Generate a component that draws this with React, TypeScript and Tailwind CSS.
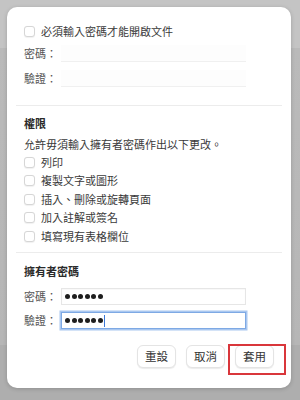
import React from "react";

const FONT = { fontFamily: '"Noto Sans CJK TC", "Noto Sans", sans-serif' };

function Box() {
  return (
    <div className="h-[11px] w-[11px] shrink-0 rounded-[3px] border border-[#d6d6d6] bg-white shadow-[0_0.5px_1px_rgba(0,0,0,0.06)]" />
  );
}

function CheckRow({ label, className = "" }: { label: string; className?: string }) {
  return (
    <div className={`flex items-center gap-[6px] ${className}`}>
      <Box />
      <span className="text-[11px] leading-none text-[#3a3a3a]">{label}</span>
    </div>
  );
}

function Dots() {
  return (
    <div className="flex items-center gap-[1.6px]">
      {[0, 1, 2, 3, 4, 5].map((i) => (
        <div key={i} className="h-[5px] w-[5px] rounded-full bg-[#1e1e1e]" />
      ))}
    </div>
  );
}

function FieldRow({
  label,
  children,
  className = "",
  field = "",
}: {
  label: string;
  children?: React.ReactNode;
  className?: string;
  field?: string;
}) {
  return (
    <div className={`flex items-center ${className}`}>
      <span className="w-[37px] text-[11px] leading-none text-[#555]">{label}</span>
      <div className={`flex h-[17px] w-[185px] items-center pl-[3px] ${field}`}>{children}</div>
    </div>
  );
}

const perms = ["列印", "複製文字或圖形", "插入、刪除或旋轉頁面", "加入註解或簽名", "填寫現有表格欄位"];

export default function App() {
  return (
    <div
      className="h-[400px] w-[300px] overflow-hidden bg-[linear-gradient(to_bottom,#c4c4c4_0,#c4c4c4_48px,#bababa_48px,#b6b6b6_345px,#aeaeae_345px)] pt-[7px] pl-[7px]"
      style={FONT}
    >
      <div className="flex h-[381px] w-[284px] flex-col rounded-[10px] bg-white pt-[15px] shadow-[0_1px_4px_rgba(0,0,0,0.18)]">
        {/* open password */}
        <div className="px-[17px]">
          <CheckRow label="必須輸入密碼才能開啟文件" className="h-[18px]" />
          <FieldRow
            label="密碼："
            className="mt-[5px]"
            field="bg-[#fdfdfd] border-b border-[#f0f0f0]"
          />
          <FieldRow
            label="驗證："
            className="mt-[8px]"
            field="bg-[#fdfdfd] border-b border-[#f0f0f0]"
          />
        </div>

        <div className="mx-[9px] mt-[18px] h-px bg-[#ececec]" />

        {/* permissions */}
        <div className="px-[17px]">
          <div className="mt-[8px] flex h-[18px] items-center text-[11px] font-bold leading-none text-[#2a2a2a]">
            權限
          </div>
          <div className="mt-[3px] flex h-[18px] items-center text-[11px] leading-none text-[#3a3a3a]">
            允許毋須輸入擁有者密碼作出以下更改。
          </div>
          {perms.map((p) => (
            <CheckRow key={p} label={p} className="h-[18.5px]" />
          ))}
        </div>

        <div className="mx-[9px] mt-[6.5px] h-px bg-[#ececec]" />

        {/* owner password */}
        <div className="px-[17px]">
          <div className="mt-[9px] flex h-[18px] items-center text-[11px] font-bold leading-none text-[#2a2a2a]">
            擁有者密碼
          </div>
          <FieldRow
            label="密碼："
            className="mt-[8px]"
            field="bg-white border border-[#e6e6e6] shadow-[inset_0_0.5px_1px_rgba(0,0,0,0.05)]"
          >
            <Dots />
          </FieldRow>
          <FieldRow
            label="驗證："
            className="mt-[7px]"
            field="bg-white border border-[#7ea9e4] shadow-[0_0_0_1.5px_#a9c7f0]"
          >
            <Dots />
            <div className="ml-[1px] h-[12px] w-px bg-[#3b78d8]" />
          </FieldRow>
        </div>

        {/* buttons */}
        <div className="mt-[16px] flex justify-end gap-[10px] px-[17px]">
          {["重設", "取消", "套用"].map((b) => (
            <div key={b} className="relative">
              <div className="flex h-[23px] w-[39px] items-center justify-center rounded-[6px] border border-[#e4e4e4] bg-white text-[11.5px] leading-none text-[#333] shadow-[0_1px_1px_rgba(0,0,0,0.08)]">
                {b}
              </div>
              {b === "套用" && (
                <div className="absolute -top-[1px] -left-[7px] h-[31px] w-[58px] border-2 border-[#d9363b]" />
              )}
            </div>
          ))}
        </div>
      </div>
    </div>
  );
}
